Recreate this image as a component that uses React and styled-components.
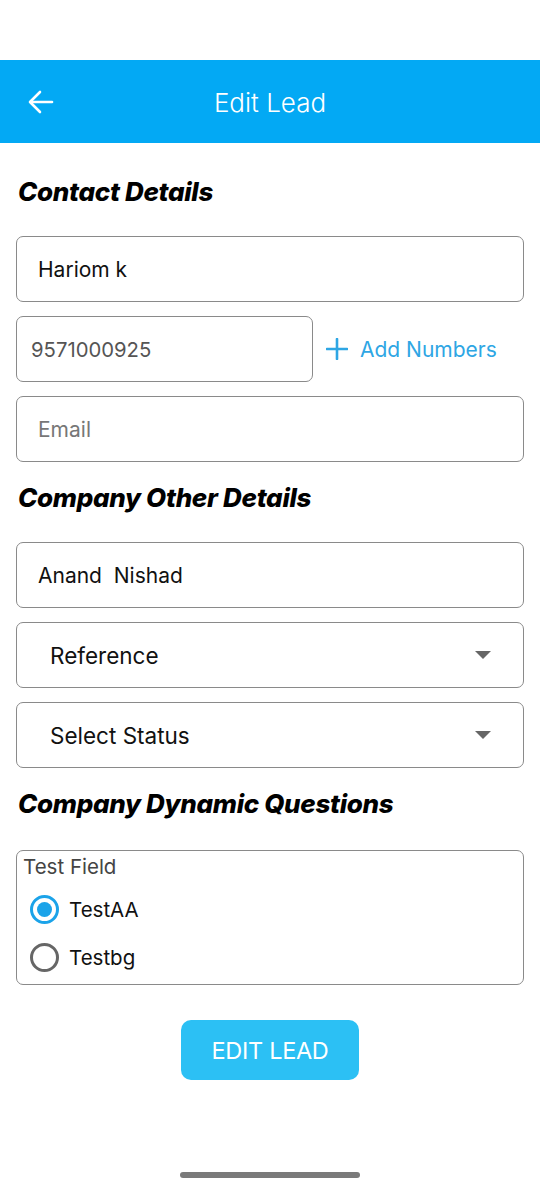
import styled, { createGlobalStyle } from "styled-components";

const GlobalStyle = createGlobalStyle`
  * {
    box-sizing: border-box;
  }

  body {
    margin: 0;
    background: #fff;
    font-family: Inter, "Noto Sans", sans-serif;
  }
`;

const Screen = styled.div`
  width: 540px;
  height: 1189px;
  display: flex;
  flex-flow: column;
  background: #fff;
`;

const StatusSpace = styled.div`
  height: 60px;
`;

const AppBar = styled.header`
  height: 83px;
  background: #03a9f4;
  display: grid;
  grid-template-columns: 84px 1fr 84px;
  align-items: center;
  color: #fff;
`;

const BackButton = styled.button`
  border: none;
  background: none;
  padding: 0 0 0 28px;
  display: flex;
  align-items: center;
  color: #fff;
`;

const Title = styled.h1`
  margin: 0;
  text-align: center;
  font-size: 26px;
  font-weight: 300;
  padding-top: 2px;
`;

const Form = styled.main`
  display: flex;
  flex-flow: column;
  padding: 34px 16px 0;
`;

const SectionTitle = styled.h2`
  margin: ${(p) => p.$top || 0}px 0 ${(p) => p.$bottom || 29}px 2px;
  height: 30px;
  line-height: 30px;
  font-size: 26px;
  font-weight: 800;
  font-style: italic;
  color: #000;
  letter-spacing: -0.3px;
`;

const Stack = styled.div`
  display: flex;
  flex-flow: column;
  gap: 14px;
`;

const Box = styled.div`
  height: 66px;
  width: ${(p) => p.$width || "100%"};
  border: 1.3px solid #8a8a8a;
  border-radius: 7px;
  display: flex;
  align-items: center;
  padding-left: ${(p) => p.$pad || 21}px;
  padding-right: 32px;
  font-size: ${(p) => p.$size || 21}px;
  color: ${(p) => p.$color || "#111"};
  justify-content: space-between;
`;

const PhoneRow = styled.div`
  display: flex;
  align-items: center;
  gap: 13px;
`;

const AddNumbers = styled.button`
  border: none;
  background: none;
  padding: 0;
  display: flex;
  align-items: center;
  gap: 12px;
  font-family: inherit;
  font-size: 21px;
  color: #2ea6e4;
`;

const Caret = styled.span`
  width: 0;
  height: 0;
  border-left: 8px solid transparent;
  border-right: 8px solid transparent;
  border-top: 8px solid #666;
`;

const Group = styled.fieldset`
  margin: 0;
  border: 1.3px solid #8a8a8a;
  border-radius: 7px;
  padding: 3px 6px 10px;
  display: flex;
  flex-flow: column;
  height: 135px;
`;

const GroupLabel = styled.div`
  font-size: 20.5px;
  color: #444;
  line-height: 26px;
  margin-bottom: 5px;
`;

const Option = styled.label`
  display: flex;
  align-items: center;
  gap: 10px;
  height: 48px;
  padding-left: 7px;
  font-size: 20.5px;
  color: #111;
`;

const Radio = styled.span`
  width: 29px;
  height: 29px;
  border-radius: 50%;
  border: 3px solid ${(p) => (p.$checked ? "#1ba3e9" : "#666")};
  display: flex;
  align-items: center;
  justify-content: center;

  &::after {
    content: "";
    width: 15px;
    height: 15px;
    border-radius: 50%;
    background: ${(p) => (p.$checked ? "#1ba3e9" : "transparent")};
  }
`;

const SubmitButton = styled.button`
  align-self: center;
  margin-top: 35px;
  width: 178px;
  height: 60px;
  border: none;
  border-radius: 10px;
  background: #2cc0f4;
  color: #fff;
  font-family: inherit;
  font-size: 23.5px;
  letter-spacing: -0.3px;
`;

const HomeIndicator = styled.div`
  margin: auto auto 11px;
  width: 180px;
  height: 6px;
  border-radius: 3px;
  background: #7a7a7a;
`;

function ArrowLeft() {
  return (
    <svg width="26" height="24" viewBox="0 0 26 24" fill="none" stroke="#fff" strokeWidth="2.6" strokeLinecap="round" strokeLinejoin="round">
      <path d="M24 12H3" />
      <path d="M12 2L2 12l10 10" />
    </svg>
  );
}

function Plus() {
  return (
    <svg width="22" height="22" viewBox="0 0 22 22" stroke="#2ea6e4" strokeWidth="2.6" strokeLinecap="round">
      <path d="M11 1v20M1 11h20" />
    </svg>
  );
}

export default function App() {
  return (
    <Screen>
      <GlobalStyle />
      <StatusSpace />
      <AppBar>
        <BackButton aria-label="Back">
          <ArrowLeft />
        </BackButton>
        <Title>Edit Lead</Title>
        <span />
      </AppBar>

      <Form>
        <SectionTitle>Contact Details</SectionTitle>
        <Stack>
          <Box>Hariom k</Box>
          <PhoneRow>
            <Box $width="297px" $pad={14} $size={20.3} $color="#555">
              9571000925
            </Box>
            <AddNumbers>
              <Plus />
              Add Numbers
            </AddNumbers>
          </PhoneRow>
          <Box $color="#777">Email</Box>
        </Stack>

        <SectionTitle $top={21}>Company Other Details</SectionTitle>
        <Stack>
          <Box>Anand&nbsp; Nishad</Box>
          <Box $pad={33} $size={22.5}>
            Reference
            <Caret />
          </Box>
          <Box $pad={33} $size={22.5}>
            Select Status
            <Caret />
          </Box>
        </Stack>

        <SectionTitle $top={21} $bottom={31}>Company Dynamic Questions</SectionTitle>
        <Group>
          <GroupLabel>Test Field</GroupLabel>
          <Option>
            <Radio $checked />
            TestAA
          </Option>
          <Option>
            <Radio />
            Testbg
          </Option>
        </Group>

        <SubmitButton>EDIT LEAD</SubmitButton>
      </Form>
      <HomeIndicator />
    </Screen>
  );
}
